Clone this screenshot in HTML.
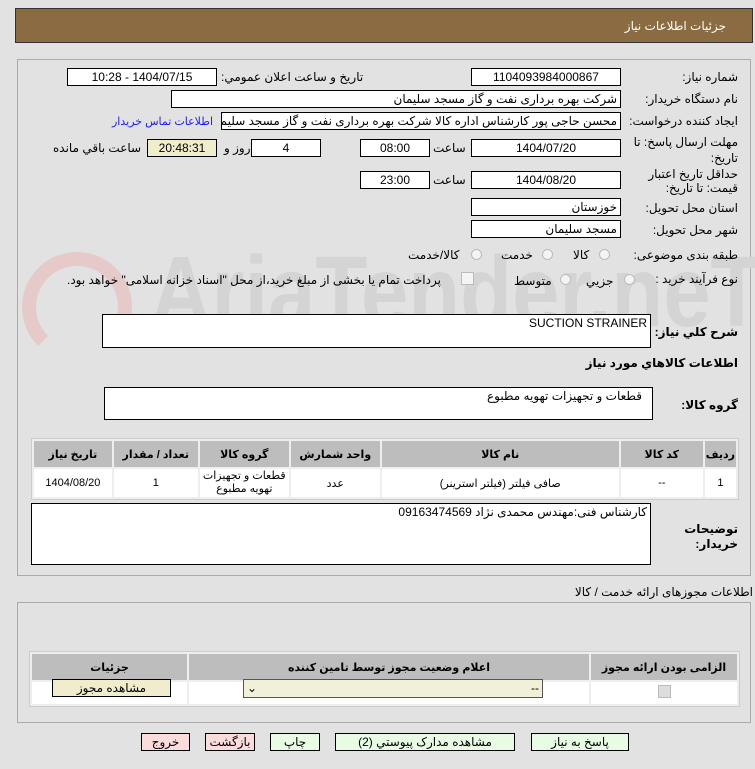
<!DOCTYPE html>
<html><head><meta charset="utf-8"><style>
body{margin:0;width:755px;height:769px;background:#e2e2e2;font-family:"Liberation Sans","DejaVu Sans",sans-serif;font-size:12px;color:#000;position:relative;overflow:hidden;direction:rtl}
.a{position:absolute;white-space:nowrap}
.in{position:absolute;background:#fff;border:1px solid #000;box-sizing:border-box;height:18px;line-height:16px;padding:0 3px;white-space:nowrap;overflow:hidden;font-size:12px}
.c{text-align:center}
.lb{position:absolute;right:17px;white-space:nowrap;font-size:12px}
.rd{position:absolute;width:11px;height:11px;border:1px solid #bbb;border-radius:50%;background:#f4f4f4;box-sizing:border-box}
.btn{position:absolute;height:18px;border:1px solid #000;box-sizing:border-box;text-align:center;line-height:16px;font-size:12px}
table{border-collapse:separate;border-spacing:2px;position:absolute;font-size:11px}
th{background:#bdbdbd;font-weight:bold;height:24px}
td{background:#fff;text-align:center}
</style></head><body>
<div class="a" style="left:15px;top:8px;width:738px;height:35px;background:#8b6b41;border:1px solid #333;box-sizing:border-box"></div>
<div class="a" style="right:29px;top:19px;color:#fff;font-size:12px">جزئیات اطلاعات نیاز</div>
<div class="a" style="left:17px;top:59px;width:734px;height:517px;border:1px solid #aaa;box-sizing:border-box"></div>

<div class="a" style="left:22px;top:252px;width:110px;height:110px;border:14px solid #e6caca;border-radius:50%;box-sizing:border-box;border-bottom-color:transparent"></div>
<div class="a" style="left:150px;top:232px;direction:ltr;font-size:100px;font-family:'Liberation Sans Narrow','Liberation Sans',sans-serif;font-weight:bold;color:#d4d4d4;line-height:120px;transform:scaleX(0.85);transform-origin:left">AriaTender.neT</div>

<div class="lb" style="top:70px">شماره نیاز:</div>
<div class="in c" style="left:471px;top:68px;width:150px">1104093984000867</div>
<div class="a" style="left:221px;top:70px">تاريخ و ساعت اعلان عمومي:</div>
<div class="in c" style="left:67px;top:68px;width:150px">1404/07/15 - 10:28</div>

<div class="lb" style="top:92px">نام دستگاه خریدار:</div>
<div class="in" style="left:171px;top:90px;width:450px">شرکت بهره برداری نفت و گاز مسجد سلیمان</div>

<div class="lb" style="top:114px">ایجاد کننده درخواست:</div>
<div class="in" style="left:221px;top:112px;width:400px">محسن حاجی پور کارشناس اداره کالا  شرکت بهره برداری نفت و گاز مسجد سلیمان</div>
<div class="a" style="left:112px;top:115px;color:#1a1aff;font-size:11px">اطلاعات تماس خریدار</div>

<div class="lb" style="top:135px">مهلت ارسال پاسخ: تا</div>
<div class="lb" style="top:151px">تاریخ:</div>
<div class="in c" style="left:471px;top:139px;width:150px">1404/07/20</div>
<div class="a" style="left:433px;top:141px">ساعت</div>
<div class="in c" style="left:360px;top:139px;width:70px">08:00</div>
<div class="in c" style="left:251px;top:139px;width:70px">4</div>
<div class="a" style="left:224px;top:141px">روز و</div>
<div class="in c" style="left:147px;top:139px;width:70px;background:#efedcb">20:48:31</div>
<div class="a" style="left:53px;top:141px">ساعت باقي مانده</div>

<div class="lb" style="top:167px">حداقل تاریخ اعتبار</div>
<div class="lb" style="top:181px">قیمت: تا تاریخ:</div>
<div class="in c" style="left:471px;top:171px;width:150px">1404/08/20</div>
<div class="a" style="left:433px;top:173px">ساعت</div>
<div class="in c" style="left:360px;top:171px;width:70px">23:00</div>

<div class="lb" style="top:201px">استان محل تحویل:</div>
<div class="in" style="left:471px;top:198px;width:150px">خوزستان</div>
<div class="lb" style="top:223px">شهر محل تحویل:</div>
<div class="in" style="left:471px;top:220px;width:150px">مسجد سلیمان</div>

<div class="lb" style="top:248px">طبقه بندی موضوعی:</div>
<div class="rd" style="left:599px;top:249px"></div><div class="a" style="left:573px;top:248px">کالا</div>
<div class="rd" style="left:542px;top:249px"></div><div class="a" style="left:501px;top:248px">خدمت</div>
<div class="rd" style="left:471px;top:249px"></div><div class="a" style="left:408px;top:248px">کالا/خدمت</div>

<div class="lb" style="top:272px">نوع فرآیند خرید :</div>
<div class="rd" style="left:624px;top:274px"></div><div class="a" style="left:586px;top:274px">جزیي</div>
<div class="rd" style="left:560px;top:274px"></div><div class="a" style="left:514px;top:274px">متوسط</div>
<div class="a" style="left:461px;top:272px;width:11px;height:11px;border:1px solid #bbb;background:#f4f4f4"></div>
<div class="a" style="left:67px;top:273px">پرداخت تمام یا بخشی از مبلغ خرید،از محل "اسناد خزانه اسلامی" خواهد بود.</div>

<div class="lb" style="top:325px;font-weight:bold">شرح كلي نياز:</div>
<div class="in" style="left:102px;top:314px;width:549px;height:34px;direction:rtl">SUCTION STRAINER</div>
<div class="lb" style="top:356px;font-weight:bold">اطلاعات كالاهاي مورد نياز</div>
<div class="lb" style="top:398px;font-weight:bold">گروه کالا:</div>
<div class="in" style="left:104px;top:387px;width:549px;height:33px;padding-right:10px">قطعات و تجهیزات تهویه مطبوع</div>

<table style="left:31px;top:438px;width:708px;background:#eee;border:1px solid #ccc">
<tr><th style="width:27px">ردیف</th><th style="width:80px">کد کالا</th><th style="width:235px">نام کالا</th><th style="width:87px">واحد شمارش</th><th style="width:87px">گروه کالا</th><th style="width:82px">تعداد / مقدار</th><th>تاریخ نیاز</th></tr>
<tr style="height:28px"><td>1</td><td>--</td><td>صافی فیلتر (فیلتر استرینر)</td><td>عدد</td><td style="line-height:13px">قطعات و تجهیزات تهویه مطبوع</td><td>1</td><td>1404/08/20</td></tr>
</table>

<div class="lb" style="top:522px;font-weight:bold">توضیحات</div>
<div class="lb" style="top:537px;font-weight:bold">خریدار:</div>
<div class="in" style="left:31px;top:503px;width:620px;height:62px">کارشناس فنی:مهندس محمدی نژاد 09163474569</div>

<div class="a" style="right:2px;top:585px">اطلاعات مجوزهای ارائه خدمت / کالا</div>
<div class="a" style="left:17px;top:602px;width:734px;height:121px;border:1px solid #aaa;box-sizing:border-box"></div>
<table style="left:29px;top:651px;width:711px;background:#eee;border:1px solid #ccc">
<tr><th style="width:144px;height:22px">الزامی بودن ارائه مجوز</th><th style="width:398px">اعلام وضعیت مجوز توسط تامین کننده</th><th>جزئیات</th></tr>
<tr style="height:22px"><td><span style="display:inline-block;width:11px;height:11px;background:#ddd;border:1px solid #bbb"></span></td><td></td><td></td></tr>
</table>
<div class="in" style="left:243px;top:679px;width:300px;height:19px;background:#f1f0d9;border-color:#555;direction:ltr">⌄<span style="float:right">--</span></div>
<div class="btn" style="left:52px;top:679px;width:119px;background:#efedcb">مشاهده مجوز</div>

<div class="btn" style="left:531px;top:733px;width:98px;background:#e8fbe3">پاسخ به نیاز</div>
<div class="btn" style="left:335px;top:733px;width:180px;background:#e8fbe3">مشاهده مدارک پیوستي (2)</div>
<div class="btn" style="left:270px;top:733px;width:50px;background:#e8fbe3">چاپ</div>
<div class="btn" style="left:205px;top:733px;width:50px;background:#fbdcdc">بازگشت</div>
<div class="btn" style="left:141px;top:733px;width:49px;background:#fbdcdc">خروج</div>
</body></html>
